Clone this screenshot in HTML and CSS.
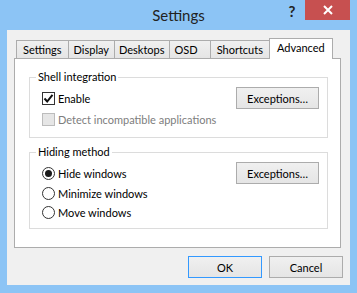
FILE: index.html
```html
<!DOCTYPE html>
<html lang="en">
<head>
    <meta charset="UTF-8">
    <title>Settings</title>
    <link rel="stylesheet" href="styles.css">
</head>
<body>

<div class="titlebar">
    <div></div>
    <div class="title">Settings</div>
    <div class="controls">
        <span class="help">?</span>
        <span class="close">
            <svg width="10" height="10" viewBox="0 0 10 10"><path d="M1 1 L9 9 M9 1 L1 9" stroke="#fff" stroke-width="2"/></svg>
        </span>
    </div>
</div>

<div class="client">
    <div class="tabs">
        <div class="tab tab-settings">Settings</div>
        <div class="tab">Display</div>
        <div class="tab tab-desktops">Desktops</div>
        <div class="tab tab-osd">OSD</div>
        <div class="tab tab-shortcuts">Shortcuts</div>
        <div class="tab active">Advanced</div>
    </div>

    <div class="panel">
        <div class="group">
            <span class="group-title">Shell integration</span>
            <div class="row">
                <label class="option">
                    <span class="check checked">
                        <svg width="11" height="11" viewBox="0 0 11 11"><path d="M1.5 5.5 L4.2 8.5 L9.5 1.8" fill="none" stroke="#111" stroke-width="2"/></svg>
                    </span>
                    Enable
                </label>
                <button class="btn">Exceptions…</button>
            </div>
            <div class="row small">
                <label class="option disabled">
                    <span class="check"></span>
                    Detect incompatible applications
                </label>
            </div>
        </div>

        <div class="group second">
            <span class="group-title">Hiding method</span>
            <div class="row">
                <label class="option"><span class="radio on"></span>Hide windows</label>
                <button class="btn">Exceptions…</button>
            </div>
            <div class="row radio-row">
                <label class="option"><span class="radio"></span>Minimize windows</label>
            </div>
            <div class="row radio-row">
                <label class="option"><span class="radio"></span>Move windows</label>
            </div>
        </div>
    </div>

    <div class="footer">
        <button class="btn wide default">OK</button>
        <button class="btn wide">Cancel</button>
    </div>
</div>

</body>
</html>
```

FILE: styles.css
```css
* {
    margin: 0;
    padding: 0;
    box-sizing: border-box;
}

body {
    background: #8cc4f5;
    font-family: Lato, "Noto Sans", sans-serif;
    font-size: 11px;
    color: #000;
    width: 357px;
    height: 293px;
    overflow: hidden;
}

/* barra de titulo */
.titlebar {
    height: 30px;
    display: grid;
    grid-template-columns: 1fr auto 1fr;
}

.title {
    font-size: 15px;
    color: #222;
    line-height: 30px;
}

.controls {
    display: flex;
    justify-content: flex-end;
    align-items: flex-start;
    padding-right: 7px;
}

.help {
    width: 26px;
    height: 20px;
    text-align: center;
    font-weight: bold;
    font-size: 15px;
    line-height: 22px;
    color: #222;
}

.close {
    width: 45px;
    height: 20px;
    background: #c75050;
    display: flex;
    align-items: center;
    justify-content: center;
}

/* area do dialogo */
.client {
    background: #f0f0f0;
    margin: 0 7px;
    height: 255px;
    padding: 8px 7px 0 7px;
}

.tabs {
    display: flex;
    align-items: flex-end;
    height: 20px;
    padding-left: 2px;
    position: relative;
    z-index: 1;
}

.tab {
    height: 18px;
    padding: 0 5px;
    border: 1px solid #acacac;
    border-bottom: none;
    border-left: none;
    background: linear-gradient(#f0f0f0, #e5e5e5);
    line-height: 17px;
}

.tab:first-child {
    border-left: 1px solid #acacac;
}

.tab.tab-settings,
.tab.tab-shortcuts {
    padding: 0 6px;
}

.tab.tab-desktops {
    padding: 0 4px;
}

.tab.tab-osd {
    padding: 0 12px 0 5px;
}

.tab.active {
    height: 21px;
    margin-bottom: -1px;
    margin-left: -1px;
    padding: 0 7px;
    background: #fff;
    border-left: 1px solid #acacac;
    line-height: 17px;
}

.panel {
    background: #fff;
    border: 1px solid #acacac;
    height: 190px;
    margin-right: 2px;
    padding: 18px 12px 0 14px;
}

.group {
    position: relative;
    border: 1px solid #dcdcdc;
    height: 61px;
    padding: 9px 8px 0 12px;
}

.group.second {
    margin-top: 14px;
    height: 77px;
}

.group-title {
    position: absolute;
    top: -9px;
    left: 6px;
    padding: 0 2px;
    background: #fff;
    line-height: 16px;
}

.row {
    display: flex;
    align-items: center;
    justify-content: space-between;
    height: 22px;
}

.row.small {
    height: 18px;
    margin-top: 1px;
}

.row.radio-row {
    height: 19px;
}

.option {
    display: flex;
    align-items: center;
    gap: 3px;
}

.option.disabled {
    color: #7d7d7d;
}

.check {
    width: 13px;
    height: 13px;
    border: 1px solid #bcbcbc;
    background: #e6e6e6;
    display: flex;
    align-items: center;
    justify-content: center;
}

.check.checked {
    border-color: #333;
    background: #fff;
}

.radio {
    width: 13px;
    height: 13px;
    border: 1px solid #333;
    border-radius: 50%;
    background: #fff;
    display: flex;
    align-items: center;
    justify-content: center;
}

.radio.on::after {
    content: "";
    width: 7px;
    height: 7px;
    border-radius: 50%;
    background: #1a1a1a;
}

.btn {
    width: 83px;
    height: 22px;
    border: 1px solid #acacac;
    background: linear-gradient(#f0f0f0, #e5e5e5);
    font-family: inherit;
    font-size: 11px;
    color: #000;
}

.footer {
    display: flex;
    justify-content: flex-end;
    gap: 7px;
    margin-top: 8px;
}

.btn.wide {
    width: 74px;
}

.btn.default {
    border-color: #3399ff;
}
```
